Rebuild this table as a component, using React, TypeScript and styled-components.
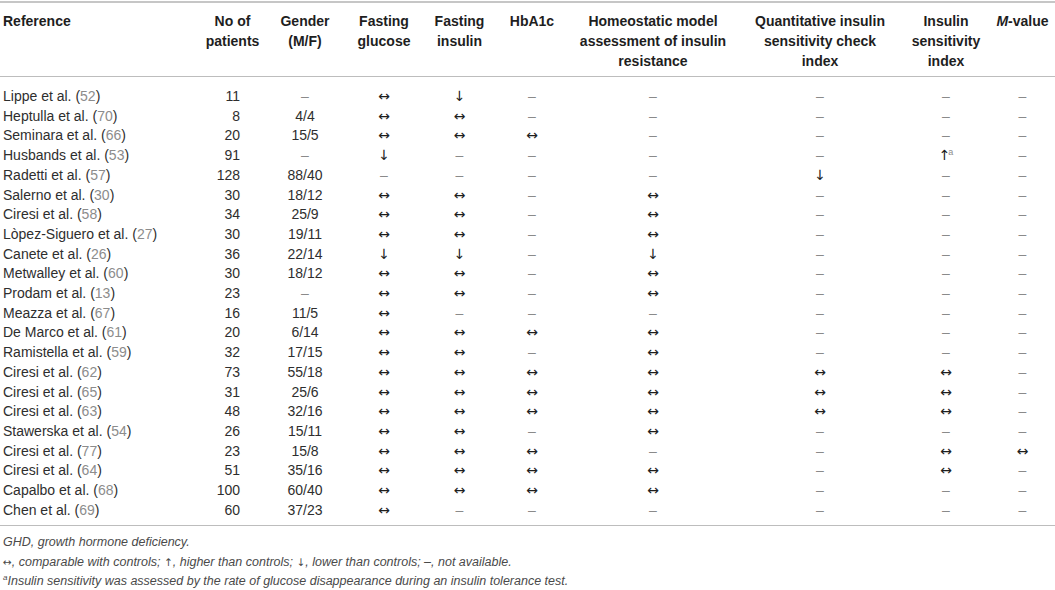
import styled, { createGlobalStyle } from 'styled-components'

const GlobalStyle = createGlobalStyle`
	html, body {
		margin: 0;
		padding: 0;
		background: #ffffff;
	}
	body {
		font-family: 'Liberation Sans', Arial, sans-serif;
		color: #2e2e2e;
	}
`

const Page = styled.div`
	width: 1055px;
	padding-top: 1px;
`

const Table = styled.table`
	width: 1055px;
	table-layout: fixed;
	border-collapse: collapse;
	font-size: 14px;
	border-top: 2px solid #c6c6c6;
	border-bottom: 1.5px solid #bdbdbd;
`

const HeadCell = styled.th<{ align?: 'left' | 'center' }>`
	font-weight: bold;
	color: #1e1e1e;
	line-height: 20px;
	text-align: ${({ align = 'center' }) => align};
	vertical-align: top;
	padding: 8px 0 5px ${({ align }) => (align === 'left' ? '3px' : '0')};
	border-bottom: 1.5px solid #bdbdbd;
`

const Cell = styled.td<{ align?: 'left' | 'center' | 'right' }>`
	line-height: 19.7px;
	padding: 0;
	white-space: nowrap;
	text-align: ${({ align = 'center' }) => align};
	padding-left: ${({ align }) => (align === 'left' ? '3px' : '0')};
	padding-right: ${({ align }) => (align === 'right' ? '25px' : '0')};
`

const Row = styled.tr`
	&:first-child td {
		padding-top: 10px;
	}
	&:last-child td {
		padding-bottom: 5px;
	}
`

const Cite = styled.span`
	color: #8c8c8c;
`

const Arrow = styled.span`
	font-family: 'DejaVu Sans', sans-serif;
	color: #1e1e1e;
`

const Dash = styled.span`
	color: #8a8a8a;
`

const Sup = styled.sup`
	font-size: 9px;
	color: #8c8c8c;
	vertical-align: 5px;
	line-height: 0;
	margin-left: -2px;
`

const Notes = styled.div`
	padding: 7px 0 0 3px;
	font-style: italic;
	font-size: 12.5px;
	color: #4a4a4a;
	line-height: 19.5px;
`

const NoteArrow = styled.span`
	font-family: 'DejaVu Sans', sans-serif;
	font-style: normal;
	font-size: 10.5px;
`

const NoteSup = styled.sup`
	font-size: 8px;
	vertical-align: 5px;
	line-height: 0;
`

const widths = [200, 65, 80, 78, 73, 72, 170, 164, 88, 65]

type RowData = [string, string, number, string, string[]]

const rows: RowData[] = [
	['Lippe et al.', '52', 11, '–', ['↔', '↓', '–', '–', '–', '–', '–']],
	['Heptulla et al.', '70', 8, '4/4', ['↔', '↔', '–', '–', '–', '–', '–']],
	['Seminara et al.', '66', 20, '15/5', ['↔', '↔', '↔', '–', '–', '–', '–']],
	['Husbands et al.', '53', 91, '–', ['↓', '–', '–', '–', '–', '↑a', '–']],
	['Radetti et al.', '57', 128, '88/40', ['–', '–', '–', '–', '↓', '–', '–']],
	['Salerno et al.', '30', 30, '18/12', ['↔', '↔', '–', '↔', '–', '–', '–']],
	['Ciresi et al.', '58', 34, '25/9', ['↔', '↔', '–', '↔', '–', '–', '–']],
	['Lòpez-Siguero et al.', '27', 30, '19/11', ['↔', '↔', '–', '↔', '–', '–', '–']],
	['Canete et al.', '26', 36, '22/14', ['↓', '↓', '–', '↓', '–', '–', '–']],
	['Metwalley et al.', '60', 30, '18/12', ['↔', '↔', '–', '↔', '–', '–', '–']],
	['Prodam et al.', '13', 23, '–', ['↔', '↔', '–', '↔', '–', '–', '–']],
	['Meazza et al.', '67', 16, '11/5', ['↔', '–', '–', '–', '–', '–', '–']],
	['De Marco et al.', '61', 20, '6/14', ['↔', '↔', '↔', '↔', '–', '–', '–']],
	['Ramistella et al.', '59', 32, '17/15', ['↔', '↔', '–', '↔', '–', '–', '–']],
	['Ciresi et al.', '62', 73, '55/18', ['↔', '↔', '↔', '↔', '↔', '↔', '–']],
	['Ciresi et al.', '65', 31, '25/6', ['↔', '↔', '↔', '↔', '↔', '↔', '–']],
	['Ciresi et al.', '63', 48, '32/16', ['↔', '↔', '↔', '↔', '↔', '↔', '–']],
	['Stawerska et al.', '54', 26, '15/11', ['↔', '↔', '–', '↔', '–', '–', '–']],
	['Ciresi et al.', '77', 23, '15/8', ['↔', '↔', '↔', '–', '–', '↔', '↔']],
	['Ciresi et al.', '64', 51, '35/16', ['↔', '↔', '↔', '↔', '–', '↔', '–']],
	['Capalbo et al.', '68', 100, '60/40', ['↔', '↔', '↔', '↔', '–', '–', '–']],
	['Chen et al.', '69', 60, '37/23', ['↔', '–', '–', '–', '–', '–', '–']],
]

const Mark = ({ value }: { value: string }) => {
	if (value === '–') return <Dash>–</Dash>
	if (value.endsWith('a')) {
		return (
			<>
				<Arrow>{value.slice(0, -1)}</Arrow>
				<Sup>a</Sup>
			</>
		)
	}
	return <Arrow>{value}</Arrow>
}

export default function App() {
	return (
		<Page>
			<GlobalStyle />
			<Table>
				<colgroup>
					{widths.map((w, i) => (
						<col key={i} style={{ width: w }} />
					))}
				</colgroup>
				<thead>
					<tr>
						<HeadCell align="left">Reference</HeadCell>
						<HeadCell>
							No of
							<br />
							patients
						</HeadCell>
						<HeadCell>
							Gender
							<br />
							(M/F)
						</HeadCell>
						<HeadCell>
							Fasting
							<br />
							glucose
						</HeadCell>
						<HeadCell>
							Fasting
							<br />
							insulin
						</HeadCell>
						<HeadCell>HbA1c</HeadCell>
						<HeadCell>
							Homeostatic model
							<br />
							assessment of insulin
							<br />
							resistance
						</HeadCell>
						<HeadCell>
							Quantitative insulin
							<br />
							sensitivity check
							<br />
							index
						</HeadCell>
						<HeadCell>
							Insulin
							<br />
							sensitivity
							<br />
							index
						</HeadCell>
						<HeadCell>
							<i>M</i>-value
						</HeadCell>
					</tr>
				</thead>
				<tbody>
					{rows.map(([name, ref, n, gender, marks], i) => (
						<Row key={i}>
							<Cell align="left">
								{name} (<Cite>{ref}</Cite>)
							</Cell>
							<Cell align="right">{n}</Cell>
							<Cell>{gender === '–' ? <Dash>–</Dash> : gender}</Cell>
							{marks.map((m, j) => (
								<Cell key={j}>
									<Mark value={m} />
								</Cell>
							))}
						</Row>
					))}
				</tbody>
			</Table>
			<Notes>
				<div>GHD, growth hormone deficiency.</div>
				<div>
					<NoteArrow>↔</NoteArrow>, comparable with controls; <NoteArrow>↑</NoteArrow>, higher than controls;{' '}
					<NoteArrow>↓</NoteArrow>, lower than controls; –, not available.
				</div>
				<div>
					<NoteSup>a</NoteSup>Insulin sensitivity was assessed by the rate of glucose disappearance during an insulin tolerance test.
				</div>
			</Notes>
		</Page>
	)
}
